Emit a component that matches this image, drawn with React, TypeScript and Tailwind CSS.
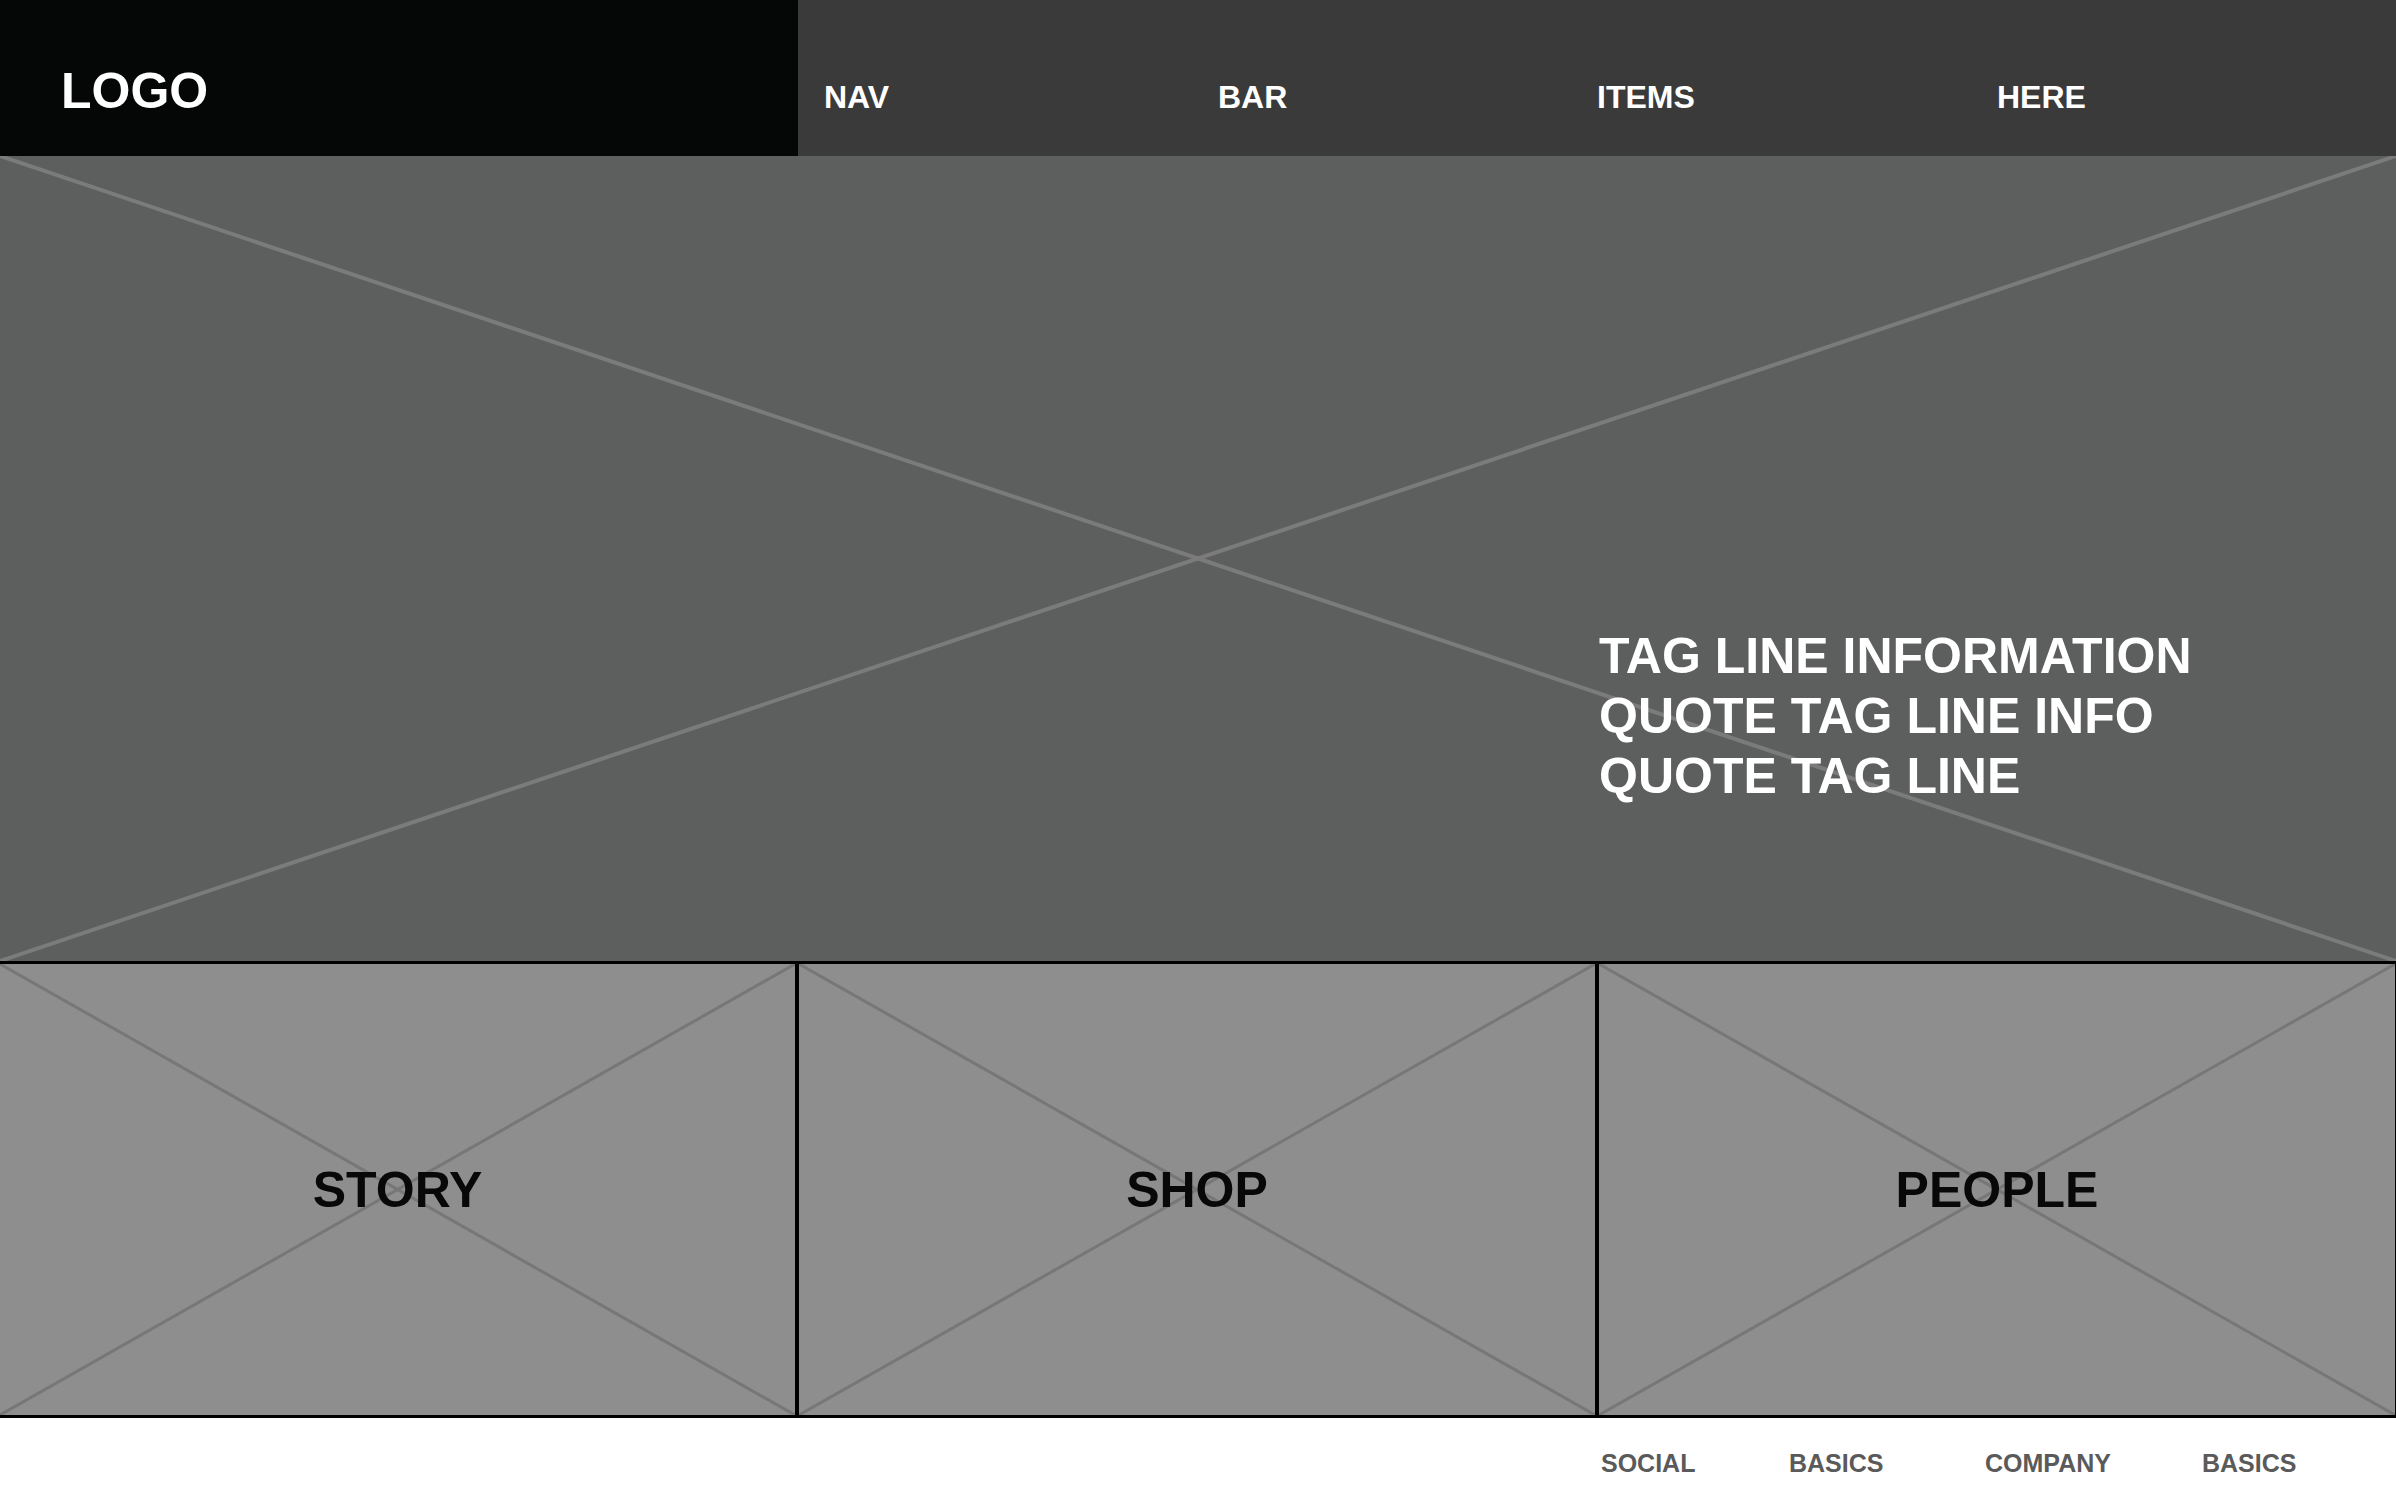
import React from "react";

function Cross({ color, width }: { color: string; width: number }) {
  return (
    <svg
      className="absolute inset-0 h-full w-full pointer-events-none"
      viewBox="0 0 100 100"
      preserveAspectRatio="none"
    >
      <line x1="0" y1="0" x2="100" y2="100" stroke={color} strokeWidth={width} vectorEffect="non-scaling-stroke" />
      <line x1="0" y1="100" x2="100" y2="0" stroke={color} strokeWidth={width} vectorEffect="non-scaling-stroke" />
    </svg>
  );
}

function Card({ label, className }: { label: string; className: string }) {
  return (
    <div className={`relative flex items-center justify-center bg-[#8e8e8e] ${className}`}>
      <Cross color="#777777" width={3} />
      <span className="relative text-[50px] leading-none font-bold text-[#080808]">{label}</span>
    </div>
  );
}

export default function App() {
  return (
    <div
      className="w-[2396px] h-[1501px] bg-white overflow-hidden flex flex-col"
      style={{ fontFamily: '"Liberation Sans", Arial, sans-serif' }}
    >
      <header className="flex h-[156px] shrink-0">
        <div className="w-[798px] bg-[#050706] pl-[61px] pt-[66px] text-[50px] leading-none font-bold text-white">
          LOGO
        </div>
        <nav className="flex flex-1 bg-[#3a3a3a] pt-[81px] text-[32px] leading-none font-bold text-white">
          <div className="w-[420px] pl-[26px]">NAV</div>
          <div className="w-[379px]">BAR</div>
          <div className="w-[400px]">ITEMS</div>
          <div className="flex-1">HERE</div>
        </nav>
      </header>

      <section className="relative h-[805px] shrink-0 bg-[#5d5f5e] pl-[1599px] pt-[470px]">
        <Cross color="#7b7b7b" width={4} />
        <div className="relative text-[50px] leading-[60px] font-bold text-white">
          <div>TAG LINE INFORMATION</div>
          <div>QUOTE TAG LINE INFO</div>
          <div>QUOTE TAG LINE</div>
        </div>
      </section>

      <section className="flex h-[457px] shrink-0 border-y-[3px] border-black">
        <Card label="STORY" className="w-[795px]" />
        <Card label="SHOP" className="w-[800px] border-l-[4px] border-black" />
        <Card label="PEOPLE" className="flex-1 border-l-[4px] border-r border-black" />
      </section>

      <footer className="flex flex-1 pl-[1601px] pt-[33px] text-[25px] leading-none font-bold text-[#5a5a5a]">
        <div className="w-[188px]">SOCIAL</div>
        <div className="w-[196px]">BASICS</div>
        <div className="w-[217px]">COMPANY</div>
        <div className="flex-1">BASICS</div>
      </footer>
    </div>
  );
}
